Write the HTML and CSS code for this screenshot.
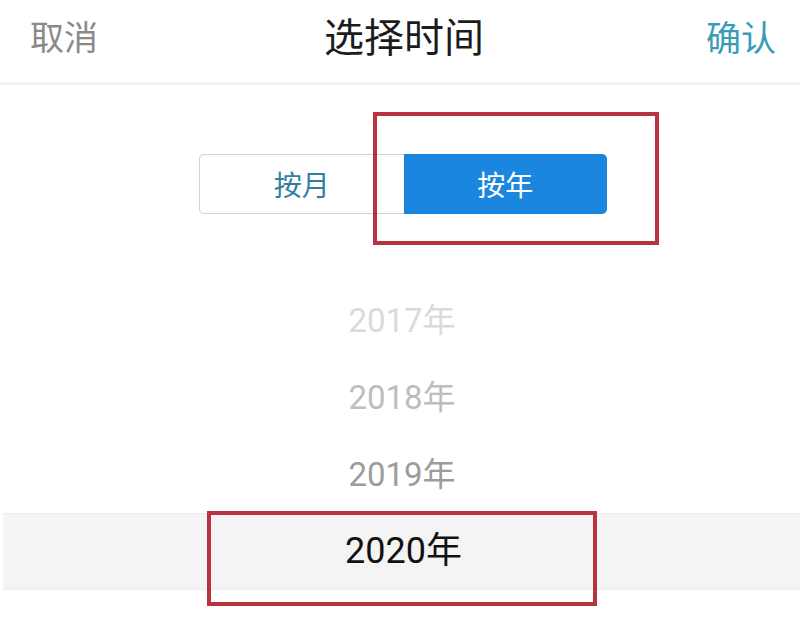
FILE: index.html
```html
<!DOCTYPE html>
<html lang="zh-CN">
<head>
    <meta charset="UTF-8">
    <meta name="viewport" content="width=device-width, initial-scale=1.0">
    <title>选择时间</title>
    <link rel="stylesheet" href="styles.css">
</head>
<body>
    <div class="sheet">
        <header class="sheet-header">
            <a class="btn-cancel">取消</a>
            <h1>选择时间</h1>
            <a class="btn-ok">确认</a>
        </header>

        <div class="segment">
            <button class="seg-item">按月</button>
            <button class="seg-item active">按年</button>
        </div>

        <ul class="picker">
            <li class="far">2017年</li>
            <li class="mid">2018年</li>
            <li class="near">2019年</li>
            <li class="selected">2020年</li>
        </ul>

        <!-- annotation boxes drawn over the screenshot -->
        <div class="mark mark-segment"></div>
        <div class="mark mark-year"></div>
    </div>
</body>
</html>
```

FILE: styles.css
```css
body {
    margin: 0;
    padding: 0;
    background: #fff;
    font-family: "Noto Sans CJK SC", "Noto Sans", sans-serif;
    overflow: hidden;
}

.sheet {
    position: relative;
    width: 800px;
    height: 626px;
    overflow: hidden;
}

.sheet-header {
    display: flex;
    align-items: center;
    justify-content: space-between;
    height: 70px;
    padding: 0 24px 12px 30px;
    border-bottom: 3px solid #f3f3f3;
}
.sheet-header h1 {
    margin: 0 0 0 4px;
    font-size: 40px;
    font-weight: 400;
    color: #1c1c1c;
}
.btn-cancel {
    font-size: 34px;
    color: #8a8a8a;
}
.btn-ok {
    font-size: 35px;
    color: #3b9bb9;
}

.segment {
    display: flex;
    width: 408px;
    height: 60px;
    margin: 69px 0 0 199px;
}
.seg-item {
    flex: 1;
    border: 1px solid #c9d3d8;
    border-right: none;
    border-radius: 5px 0 0 5px;
    background: #fff;
    color: #2f7f9f;
    font-family: inherit;
    font-size: 28px;
    padding: 0;
}
.seg-item.active {
    border: none;
    border-radius: 0 5px 5px 0;
    background: #1b86e0;
    color: #fff;
}

.picker {
    list-style: none;
    margin: 68px 0 0 0;
    padding: 0;
}
.picker li {
    height: 77px;
    line-height: 77px;
    text-align: center;
    font-family: Roboto, "Noto Sans CJK SC", sans-serif;
    font-size: 33px;
    padding-left: 4px;
}
.picker .far { color: #dadada; }
.picker .mid { color: #bdbdbd; }
.picker .near { color: #9c9c9c; }
.picker .selected {
    margin-left: 3px;
    background: #f4f4f4;
    border-top: 1px solid #ececec;
    border-bottom: 1px solid #ececec;
    height: 75px;
    line-height: 75px;
    color: #111;
    font-size: 36px;
}

.mark {
    position: absolute;
    border: 4px solid #b8323f;
    box-sizing: border-box;
}
.mark-segment {
    left: 373px;
    top: 112px;
    width: 286px;
    height: 133px;
}
.mark-year {
    left: 207px;
    top: 511px;
    width: 390px;
    height: 95px;
}
```
